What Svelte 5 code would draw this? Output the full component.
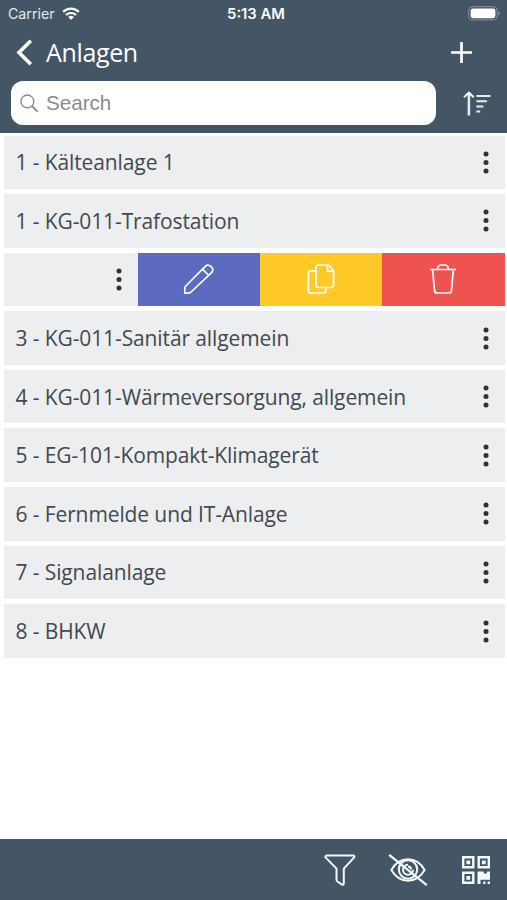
<script>
	let search = '';
	let items = [
		{ label: '1 - Kälteanlage 1' },
		{ label: '1 - KG-011-Trafostation' },
		{ label: '', open: true },
		{ label: '3 - KG-011-Sanitär allgemein' },
		{ label: '4 - KG-011-Wärmeversorgung, allgemein' },
		{ label: '5 - EG-101-Kompakt-Klimagerät' },
		{ label: '6 - Fernmelde und IT-Anlage' },
		{ label: '7 - Signalanlage' },
		{ label: '8 - BHKW' }
	];
</script>

<div class="screen">
	<header>
		<div class="status">
			<div class="carrier">
				<span>Carrier</span>
				<svg width="18" height="14" viewBox="0 0 18 14" fill="none" stroke="#fff" stroke-width="2.2">
					<path d="M1.2 4.9a11 11 0 0 1 15.6 0M4 8a7.2 7.2 0 0 1 10 0" />
					<path d="M9 13 6.2 10.1a4 4 0 0 1 5.6 0z" fill="#fff" stroke="none" />
				</svg>
			</div>
			<div class="time">5:13 AM</div>
			<svg class="battery" width="33" height="15" viewBox="0 0 33 15">
				<rect x=".7" y=".7" width="28.6" height="13.2" rx="4" fill="none" stroke="#8792a0" />
				<rect x="2.6" y="2.6" width="24.8" height="9.6" rx="2.4" fill="#fff" />
				<path d="M30.7 5.2q2 2.1 0 4.2z" fill="#a2abb4" />
			</svg>
		</div>

		<div class="titlebar">
			<button class="back" aria-label="Back">
				<svg width="17" height="27" viewBox="0 0 17 27" fill="none" stroke="#fff" stroke-width="3.6">
					<path d="M14.8 1.8 3 13.5l11.8 11.7" />
				</svg>
			</button>
			<h1>Anlagen</h1>
			<button class="add" aria-label="Add">
				<svg width="21" height="21" viewBox="0 0 21 21" stroke="#fff" stroke-width="2.7">
					<path d="M10.5 0v21M0 10.5h21" />
				</svg>
			</button>
		</div>

		<div class="searchbar">
			<label>
				<svg width="19" height="19" viewBox="0 0 19 19" fill="none" stroke="#8b8b8d" stroke-width="1.4">
					<circle cx="7.4" cy="7.4" r="6.4" />
					<path d="m12 12 5.6 5.6" stroke-width="1.9" />
				</svg>
				<input type="text" placeholder="Search" bind:value={search} />
			</label>
			<button class="sort" aria-label="Sort">
				<svg width="28" height="25" viewBox="0 0 28 25" fill="none" stroke="#e6ebef" stroke-width="2">
					<path d="M5.9 24.5V2" stroke-width="2.5" />
					<path d="M1 6.2 5.9 1.6l4.8 4.6" stroke="#fff" />
					<path d="M13.4 5h14M13.4 10.2h10.5M13.4 15.4h7M13.4 20.5h3.8" />
				</svg>
			</button>
		</div>
	</header>

	<main>
		{#each items as item}
			<div class="row" class:open={item.open}>
				<div class="content">
					<span>{item.label}</span>
					<button class="more" aria-label="More">
						<svg width="6" height="23" viewBox="0 0 6 23" fill="#2d3237">
							<circle cx="3" cy="3" r="2.5" />
							<circle cx="3" cy="11.5" r="2.5" />
							<circle cx="3" cy="20" r="2.5" />
						</svg>
					</button>
				</div>
				{#if item.open}
					<button class="action edit" aria-label="Edit">
						<svg width="32" height="32" viewBox="0 0 32 32">
							<path d="M1.8 30.2V24L22.3 3.3q2.6-2.5 5.8.4t.5 5.9L8 29l-2 1.2zM19.5 6.1l6.4 6.4" />
						</svg>
					</button>
					<button class="action copy" aria-label="Copy">
						<svg width="28" height="32" viewBox="0 0 28 32">
							<path d="M19 25.4v1.9q0 2.7-2.7 2.7H4.1q-2.7 0-2.7-2.7V10.5q0-2.7 2.7-2.7H9" />
							<path d="M11.7 2h9.6l5.3 5.5V21.8q0 2.7-2.7 2.7H11.7Q9 24.5 9 21.8V4.7Q9 2 11.7 2z" />
							<path d="M20.4 2v6.2h6.2" />
						</svg>
					</button>
					<button class="action delete" aria-label="Delete">
						<svg width="28" height="32" viewBox="0 0 28 32">
							<path d="M1 6.5h26M3.6 6.5l2 21.3q.2 2.2 2.4 2.2h12q2.2 0 2.4-2.2l2-21.3M8.4 6.3Q9 2 12 2h4q3 0 3.6 4.3" />
						</svg>
					</button>
				{/if}
			</div>
		{/each}
	</main>

	<footer>
		<button aria-label="Filter">
			<svg width="32" height="32" viewBox="0 0 32 32" fill="none" stroke="#f4f8fb" stroke-width="2" stroke-linejoin="round">
				<path d="M3 1.6h26q2 0 1.2 1.8L19.8 14.6v14.6q0 2.5-2.2 1.1l-4.2-2.8q-.9-.7-.9-2V14.6L1.5 3.4Q1 1.6 3 1.6z" />
			</svg>
		</button>
		<button aria-label="Hide">
			<svg width="40" height="32" viewBox="0 0 40 32" fill="none" stroke="#f4f8fb" stroke-width="2">
				<path d="M3.4 16C11.5 1.8 28.5 1.8 36.6 16 28.5 30.2 11.5 30.2 3.4 16z" />
				<circle cx="20" cy="15.5" r="9.2" />
				<path d="M20 10.8a5 5 0 1 0 5 5" />
				<path d="M20 12.5q3 0 3 3" />
				<path d="m1.2.9 37.6 30.2" stroke-width="2.3" />
			</svg>
		</button>
		<button aria-label="Scan code">
			<svg width="28" height="28" viewBox="0 0 28 28" fill="#f4f8fb">
				<path
					fill-rule="evenodd"
					d="M0 0h12.5v12.5H0zM2.4 2.4v7.7h7.7V2.4zM15.5 0H28v12.5H15.5zM17.9 2.4v7.7h7.7V2.4zM0 15.5h12.5V28H0zM2.4 17.9v7.7h7.7v-7.7z"
				/>
				<path d="M4.4 4.4h3.8v3.8H4.4zM19.9 4.4h3.8v3.8h-3.8zM4.4 19.9h3.8v3.8H4.4z" />
				<path d="M15.5 15.5h6.2v2H25v-2h3v8.2h-9.5V28h-3zM21.2 25.6h2.2V28h-2.2zM25.6 25.6H28V28h-2.4z" />
			</svg>
		</button>
	</footer>
</div>

<style>
	:global(body) {
		margin: 0;
		background: #fff;
	}
	.screen {
		display: flex;
		flex-direction: column;
		width: 507px;
		height: 900px;
		overflow: hidden;
		background: #fff;
		color: #43494f;
		font-family: 'Open Sans', sans-serif;
	}
	button {
		display: flex;
		align-items: center;
		justify-content: center;
		padding: 0;
		border: 0;
		background: none;
	}
	svg {
		display: block;
		flex: none;
	}

	header {
		box-sizing: border-box;
		height: 132.5px;
		flex: none;
		color: #fff;
		background: #445566;
	}
	.status {
		display: grid;
		grid-template-columns: 1fr auto 1fr;
		align-items: center;
		height: 27px;
		padding: 0 6px 0 8px;
		font-family: Inter, sans-serif;
		font-size: 14.2px;
	}
	.carrier {
		display: flex;
		align-items: center;
		gap: 7px;
		color: #e4e9ed;
	}
	.time {
		font-size: 14.8px;
		font-weight: 600;
		padding-left: 3px;
	}
	.battery {
		justify-self: end;
	}
	.titlebar {
		display: flex;
		align-items: center;
		height: 54px;
		padding: 0 35px 4px 16px;
		box-sizing: border-box;
	}
	h1 {
		flex: 1;
		margin: 0 0 0 13px;
		font-size: 25px;
		letter-spacing: -0.35px;
		line-height: 34px;
		font-weight: 400;
	}
	.searchbar {
		display: flex;
		align-items: center;
		justify-content: space-between;
		padding: 0 16px 0 11px;
	}
	label {
		box-sizing: border-box;
		display: flex;
		align-items: center;
		gap: 7px;
		width: 425px;
		height: 44px;
		padding: 0 9px;
		border-radius: 12px;
		background: #fff;
	}
	input {
		flex: 1;
		min-width: 0;
		padding: 0;
		border: 0;
		outline: 0;
		font: 20.6px 'Liberation Sans', sans-serif;
	}
	input::placeholder {
		color: #8b8b8d;
		opacity: 1;
	}

	main {
		flex: 1;
		display: flex;
		flex-direction: column;
		gap: 5px;
		padding: 3px 2.5px 0 3.5px;
	}
	.row {
		display: flex;
		height: 53.6px;
	}
	.content {
		flex: 1;
		display: flex;
		align-items: center;
		justify-content: space-between;
		padding: 0 16px 0 12px;
		background: #eceeef;
		font-size: 21px;
		letter-spacing: -0.11px;
		white-space: nowrap;
	}
	.action {
		width: 122.2px;
	}
	.action svg {
		fill: none;
		stroke: #fff;
		stroke-width: 1.7;
		stroke-linejoin: round;
	}
	.edit {
		background: #5c6bc0;
	}
	.copy {
		background: #ffca28;
	}
	.delete {
		background: #ef5350;
	}

	footer {
		box-sizing: border-box;
		display: flex;
		align-items: center;
		justify-content: flex-end;
		gap: 34px;
		height: 61px;
		padding: 0 17px 0 0;
		background: #445566;
	}
	footer button:first-child {
		margin-right: -2px;
	}
</style>
